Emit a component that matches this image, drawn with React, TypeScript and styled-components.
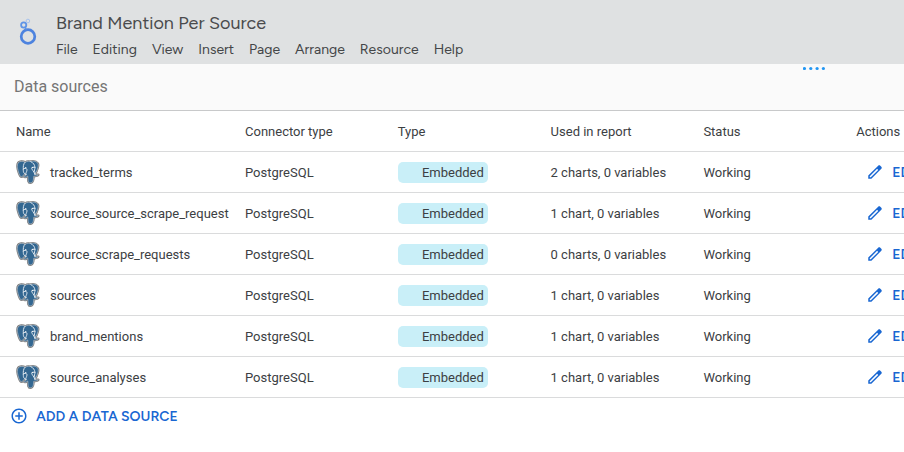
import React from 'react';
import styled, { createGlobalStyle } from 'styled-components';

const GlobalStyle = createGlobalStyle`
  * { box-sizing: border-box; }
  body {
    margin: 0;
    background: #fff;
    color: #3c4043;
    font-family: Roboto, "Liberation Sans", sans-serif;
    font-size: 13px;
    overflow-x: hidden;
  }
`;

const TopBar = styled.header`
  display: flex;
  align-items: center;
  gap: 16px;
  height: 64px;
  padding: 0 16px;
  background: #dfe1e2;
`;

const Logo = styled.svg`
  flex: none;
  width: 24px;
  height: 32px;
`;

const Heading = styled.div`
  padding-top: 6px;
`;

const Title = styled.h1`
  margin: 0 0 4px;
  font-family: Figtree, Roboto, sans-serif;
  font-size: 18px;
  font-weight: 400;
  line-height: 26px;
  color: #4a4b4d;
  white-space: nowrap;
`;

const MenuBar = styled.nav`
  display: flex;
  gap: 15px;
`;

const MenuButton = styled.button`
  padding: 0;
  border: 0;
  background: none;
  color: #444648;
  font-family: Figtree, Roboto, sans-serif;
  font-size: 14px;
  line-height: 20px;
  white-space: nowrap;
  cursor: pointer;
`;

const PanelHeader = styled.div`
  display: flex;
  align-items: flex-start;
  justify-content: space-between;
  height: 47px;
  padding: 0 79px 0 14px;
  background: #fafafa;
  border-bottom: 1px solid #c8c9ca;
`;

const PanelTitle = styled.h2`
  margin: 0;
  font-size: 16px;
  font-weight: 400;
  line-height: 46px;
  color: #757575;
`;

const DragHandle = styled.svg`
  width: 22px;
  height: 8px;
`;

const TableScroller = styled.div`
  overflow-x: auto;
  scrollbar-width: none;
`;

const Table = styled.table`
  width: 100%;
  min-width: 1009px;
  table-layout: fixed;
  border-collapse: separate;
  border-spacing: 0;
`;

const NameColumn = styled.col`
  width: 245px;
`;

const HeadCell = styled.th`
  height: 41px;
  padding: 0;
  border-bottom: 1px solid #dadbdc;
  font-weight: 400;
  text-align: left;
  white-space: nowrap;

  &:first-child { padding-left: 16px; }
`;

const Cell = styled.td`
  height: 41px;
  padding: 0;
  border-bottom: 1px solid #dadbdc;
  white-space: nowrap;

  &:first-child { padding-left: 16px; }
`;

const SourceName = styled.div`
  display: flex;
  align-items: center;
  gap: 10px;
`;

const ElephantSvg = styled.svg`
  flex: none;
  width: 24px;
  height: 24px;
`;

const Badge = styled.span`
  display: flex;
  justify-content: flex-end;
  width: 90px;
  padding: 0 4px;
  border-radius: 5px;
  background: #c9eff8;
  line-height: 21px;
`;

const EditButton = styled.button`
  display: flex;
  align-items: center;
  gap: 8px;
  padding: 0 0 0 10px;
  border: 0;
  background: none;
  color: #1967d2;
  font-family: Figtree, Roboto, sans-serif;
  font-size: 14px;
  font-weight: 600;
  cursor: pointer;

  svg { width: 18px; height: 18px; }
`;

const AddButton = styled.button`
  display: flex;
  align-items: center;
  gap: 8px;
  height: 36px;
  padding: 0 10px;
  border: 0;
  background: none;
  color: #1967d2;
  font-family: Figtree, Roboto, sans-serif;
  font-size: 14px;
  font-weight: 600;
  cursor: pointer;

  svg { width: 18px; height: 18px; }
`;

const menus = ['File', 'Editing', 'View', 'Insert', 'Page', 'Arrange', 'Resource', 'Help'];
const columns = ['Name', 'Connector type', 'Type', 'Used in report', 'Status', 'Actions'];

interface Source {
  name: string;
  usage: string;
}

const sources: Source[] = [
  { name: 'tracked_terms', usage: '2 charts, 0 variables' },
  { name: 'source_source_scrape_request', usage: '1 chart, 0 variables' },
  { name: 'source_scrape_requests', usage: '0 charts, 0 variables' },
  { name: 'sources', usage: '1 chart, 0 variables' },
  { name: 'brand_mentions', usage: '1 chart, 0 variables' },
  { name: 'source_analyses', usage: '1 chart, 0 variables' },
];

const elephantOutline =
  'M93.809 92.112c.785-6.533.55-7.492 5.416-6.433l1.235.108c3.742.17 8.637-.602 11.513-1.938 6.191-2.873 9.861-7.668 3.758-6.409-13.924 2.873-14.881-1.842-14.881-1.842 14.703-21.815 20.849-49.508 15.543-56.287-14.47-18.489-39.517-9.746-39.936-9.52l-.134.025c-2.751-.571-5.83-.912-9.289-.968-6.301-.104-11.082 1.652-14.709 4.402 0 0-44.683-18.409-42.604 23.151.442 8.841 12.672 66.898 27.26 49.362 5.332-6.412 10.484-11.834 10.484-11.834 2.558 1.699 5.622 2.567 8.834 2.255l.249-.212c-.078.796-.044 1.575.099 2.497-3.757 4.199-2.653 4.936-10.166 6.482-7.602 1.566-3.136 4.355-.221 5.084 3.535.884 11.712 2.136 17.238-5.598l-.22.882c1.474 1.18 1.375 8.477 1.583 13.69.209 5.214.558 10.079 1.621 12.948 1.063 2.868 2.317 10.256 12.191 8.14 8.252-1.764 14.561-4.309 15.136-27.985z';

const Elephant = () => (
  <ElephantSvg viewBox="3 2 124 124" aria-hidden="true">
    <path d={elephantOutline} fill="#777" stroke="#777" strokeWidth="11" strokeLinejoin="round" />
    <path d={elephantOutline} fill="#336791" stroke="#c4ced8" strokeWidth="3" strokeLinejoin="round" />
    <g fill="none" stroke="#dfe7ee" strokeWidth="5" strokeLinecap="round" strokeLinejoin="round">
      <path d="M50 13c-10 10-10 24-9 37 0 8-1 14 4 20 2 3 5 5 8 6" />
      <path d="M40 49c7-5 16-6 19 0 2 6-1 12-3 17-2 4-3 7-2 11" />
      <path d="M79 10c14 6 21 18 22 30 1 7-4 11-2 19 1 6 4 11 2 17" />
      <path d="M101 40c-8-2-16-1-17 4 0 7 10 14 17 32" />
    </g>
    <path d="M49 41c4-2 8-1 8 1s-4 4-7 2zM84 40c3-3 8-2 9 0s-5 4-9 2z" fill="#fff" />
  </ElephantSvg>
);

const Pencil = () => (
  <svg viewBox="0 0 24 24" fill="currentColor" aria-hidden="true">
    <path d="M20.41 4.94l-1.35-1.35c-.78-.78-2.05-.78-2.83 0L3 16.82V21h4.18L20.41 7.77c.79-.78.79-2.05 0-2.83zM6.41 19.06L5 19v-1.36l9.82-9.82 1.41 1.41-9.82 9.83z" />
  </svg>
);

const PlusCircle = () => (
  <svg viewBox="0 0 24 24" fill="currentColor" aria-hidden="true">
    <path d="M13 7h-2v4H7v2h4v4h2v-4h4v-2h-4V7zm-1-5C6.48 2 2 6.48 2 12s4.480 10 10 10 10-4.480 10-10S17.520 2 12 2zm0 18c-4.410 0-8-3.590-8-8s3.590-8 8-8 8 3.590 8 8-3.590 8-8 8z" />
  </svg>
);

export default function App() {
  return (
    <>
      <GlobalStyle />
      <TopBar>
        <Logo viewBox="0 0 24 32" fill="none" role="img" aria-label="Looker Studio">
          <circle cx="12" cy="20.5" r="6.8" stroke="#4d83df" strokeWidth="2.7" />
          <path d="M8.8 11.2l1.6 2.5" stroke="#5f94e6" strokeWidth="1.5" />
          <circle cx="7.7" cy="9" r="2.6" stroke="#5f94e6" strokeWidth="1.8" />
          <circle cx="11.9" cy="5" r="1.8" stroke="#a7c3ee" strokeWidth="1" />
        </Logo>
        <Heading>
          <Title>Brand Mention Per Source</Title>
          <MenuBar>
            {menus.map((menu) => (
              <MenuButton key={menu} type="button">{menu}</MenuButton>
            ))}
          </MenuBar>
        </Heading>
      </TopBar>
      <main>
        <PanelHeader>
          <PanelTitle>Data sources</PanelTitle>
          <DragHandle viewBox="0 0 22 8" fill="#2196f3" aria-hidden="true">
            <circle cx="1.5" cy="4.5" r="1.6" />
            <circle cx="7.8" cy="4.5" r="1.6" />
            <circle cx="14.1" cy="4.5" r="1.6" />
            <circle cx="20.4" cy="4.5" r="1.6" />
          </DragHandle>
        </PanelHeader>
        <TableScroller>
          <Table>
            <colgroup>
              <NameColumn />
              <col span={5} />
            </colgroup>
            <thead>
              <tr>
                {columns.map((column) => (
                  <HeadCell key={column} scope="col">{column}</HeadCell>
                ))}
              </tr>
            </thead>
            <tbody>
              {sources.map((source) => (
                <tr key={source.name}>
                  <Cell>
                    <SourceName>
                      <Elephant />
                      {source.name}
                    </SourceName>
                  </Cell>
                  <Cell>PostgreSQL</Cell>
                  <Cell><Badge>Embedded</Badge></Cell>
                  <Cell>{source.usage}</Cell>
                  <Cell>Working</Cell>
                  <Cell>
                    <EditButton type="button">
                      <Pencil />
                      EDIT
                    </EditButton>
                  </Cell>
                </tr>
              ))}
            </tbody>
          </Table>
        </TableScroller>
        <AddButton type="button">
          <PlusCircle />
          ADD A DATA SOURCE
        </AddButton>
      </main>
    </>
  );
}
